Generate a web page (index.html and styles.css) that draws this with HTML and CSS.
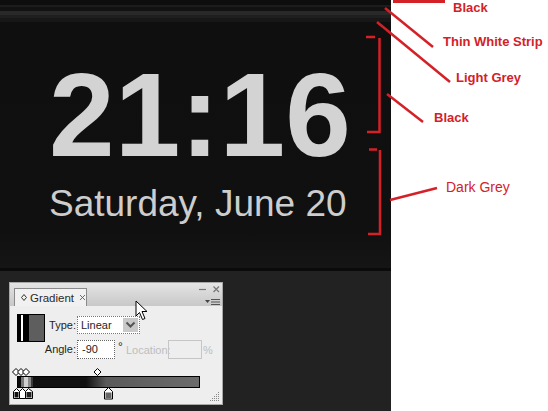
FILE: index.html
```html
<!DOCTYPE html>
<html>
<head>
<meta charset="utf-8">
<link rel="stylesheet" href="styles.css">
</head>
<body>
<div class="page">
  <div class="device">
    <div class="bands">
      <div class="b b1"></div><div class="b b2"></div><div class="b b3"></div>
      <div class="b b4"></div><div class="b b5"></div><div class="b b6"></div>
    </div>
    <div class="screen">
      <div class="time">21:16</div>
      <div class="date">Saturday, June 20</div>
    </div>
    <div class="divider"></div>
    <div class="dock">
      <div class="panel">
        <div class="ptitle">
          <div class="tab">
            <svg class="tabicon" width="6" height="7" viewBox="0 0 6 7"><path d="M3 0.5 L5.5 3.5 L3 6.5 L0.5 3.5 Z" fill="none" stroke="#333" stroke-width="1"/></svg>
            <span class="tabname">Gradient</span>
            <svg class="tabx" width="7" height="7" viewBox="0 0 7 7"><path d="M1 1 L6 6 M6 1 L1 6" stroke="#666" stroke-width="1"/></svg>
          </div>
          <svg class="pctrl" width="24" height="23" viewBox="0 0 24 23">
            <path d="M1 6.5 H8" stroke="#777" stroke-width="1.2"/>
            <path d="M15.5 3.5 L21 9 M21 3.5 L15.5 9" stroke="#777" stroke-width="1.2"/>
            <path d="M7 17 H12 L9.5 20 Z" fill="#444"/>
            <path d="M13 16.5 H22 M13 19 H22 M13 21.5 H22" stroke="#555" stroke-width="1"/>
          </svg>
        </div>
        <div class="pbody">
          <div class="row1">
            <div class="swatch"></div>
            <div class="lbl1">Type:</div>
            <div class="select"><span class="selval">Linear</span>
              <div class="selbtn"><svg width="11" height="8" viewBox="0 0 11 8"><path d="M1.5 1.5 L5.5 5.5 L9.5 1.5" fill="none" stroke="#555" stroke-width="2"/></svg></div>
            </div>
          </div>
          <div class="row2">
            <div class="lbl2">Angle:</div>
            <div class="input">-90</div>
            <div class="deg">°</div>
            <div class="loc">Location:</div>
            <div class="input2"></div>
            <div class="pct">%</div>
          </div>
          <div class="gwrap">
            <div class="gbar"></div>
            <svg class="markers" width="200" height="32" viewBox="0 0 200 32">
              <path d="M4 0.5 L7.5 4 L4 7.5 L0.5 4 Z" fill="#fff" stroke="#000" stroke-width="1"/>
              <path d="M9 0.5 L12.5 4 L9 7.5 L5.5 4 Z" fill="#fff" stroke="#000" stroke-width="1"/>
              <path d="M14 0.5 L17.5 4 L14 7.5 L10.5 4 Z" fill="#fff" stroke="#000" stroke-width="1"/>
              <path d="M85.5 0.5 L89 4 L85.5 7.5 L82 4 Z" fill="#fff" stroke="#000" stroke-width="1"/>
              <path d="M1.5 23.5 L4.5 20.5 L7.5 23.5 V30.5 H1.5 Z" fill="#fff" stroke="#000" stroke-width="1"/>
              <rect x="2.5" y="24" width="4" height="5.5" fill="#111"/>
              <path d="M7.5 23.5 L10.5 20.5 L13.5 23.5 V30.5 H7.5 Z" fill="#fff" stroke="#000" stroke-width="1"/>
              <path d="M13.5 23.5 L16.5 20.5 L20.5 23.5 V30.5 H13.5 Z" fill="#fff" stroke="#000" stroke-width="1"/>
              <rect x="14.5" y="24" width="5" height="5.5" fill="#222"/>
              <path d="M92.5 23.5 L96.5 19.5 L100.5 23.5 V31 H92.5 Z" fill="#fff" stroke="#000" stroke-width="1"/>
              <rect x="93.5" y="24.5" width="6" height="5.5" fill="#666"/>
            </svg>
          </div>
        </div>
        <svg class="grip" width="10" height="10" viewBox="0 0 10 10">
          <g fill="#888">
            <rect x="8" y="0" width="1" height="1"/>
            <rect x="6" y="2" width="1" height="1"/><rect x="8" y="2" width="1" height="1"/>
            <rect x="4" y="4" width="1" height="1"/><rect x="6" y="4" width="1" height="1"/><rect x="8" y="4" width="1" height="1"/>
            <rect x="2" y="6" width="1" height="1"/><rect x="4" y="6" width="1" height="1"/><rect x="6" y="6" width="1" height="1"/><rect x="8" y="6" width="1" height="1"/>
            <rect x="0" y="8" width="1" height="1"/><rect x="2" y="8" width="1" height="1"/><rect x="4" y="8" width="1" height="1"/><rect x="6" y="8" width="1" height="1"/><rect x="8" y="8" width="1" height="1"/>
          </g>
        </svg>
        <svg class="cursor" width="14" height="21" viewBox="0 0 14 21">
          <path d="M1 1 L1 16 L4.5 12.5 L7.5 19.5 L10 18.5 L7 11.5 L12 11.5 Z" fill="#fff" stroke="#000" stroke-width="1" stroke-linejoin="miter"/>
        </svg>
      </div>
    </div>
  </div>

  <svg class="notes" width="548" height="411" viewBox="0 0 548 411">
    <g stroke="#d42128" stroke-width="2.5" fill="none" stroke-linecap="butt">
      <path d="M385 8 L433 47"/>
      <path d="M377 22 L450 82"/>
      <path d="M366 37 H375"/>
      <path d="M379.5 38 V132 H367"/>
      <path d="M387 94 L423 122"/>
      <path d="M369 149.5 H377"/>
      <path d="M380 150 V234 H368"/>
      <path d="M390 200 L437 188"/>
    </g>
    <rect x="393" y="0" width="52" height="3" fill="#d42128"/>
  </svg>
  <div class="note n1">Black</div>
  <div class="note n2">Thin White Strip</div>
  <div class="note n3">Light Grey</div>
  <div class="note n4">Black</div>
  <div class="note n5">Dark Grey</div>
</div>
</body>
</html>
```

FILE: styles.css
```css
* { box-sizing: border-box; }
html, body { margin: 0; padding: 0; }
body {
  background: #ffffff;
  width: 548px;
  height: 411px;
  overflow: hidden;
  font-family: "Liberation Sans", Arial, sans-serif;
}
.page { position: relative; width: 548px; height: 411px; }

.device { width: 391px; display: flex; flex-direction: column; }
.bands { display: flex; flex-direction: column; }
.b1 { height: 5px; background: #0d0d0d; }
.b2 { height: 2px; background: #1c1c1c; }
.b3 { height: 4px; background: #121212; }
.b4 { height: 4px; background: #292929; }
.b5 { height: 3px; background: #1f1f1f; }
.b6 { height: 4px; background: #171717; }

.screen {
  height: 246px;
  background: linear-gradient(#0f0f0f 0, #101010 85%, #151515 100%);
  padding: 34px 0 0 49px;
  color: #d3d3d3;
}
.time { font-weight: 700; font-size: 118px; line-height: 118px; height: 118px; white-space: nowrap; }
.date { margin-top: 11px; font-size: 37px; line-height: 37px; color: #cdcdcd; white-space: nowrap; }
.divider { height: 3px; background: #0b0b0b; }
.dock { height: 140px; background: #222222; padding: 11px 0 0 9px; }

.panel {
  position: relative;
  width: 214px;
  height: 123px;
  background: #eeeeee;
  border: 1px solid #a8a8a8;
  display: flex;
  flex-direction: column;
  font-size: 11px;
  color: #1e1e1e;
}
.ptitle {
  height: 23px;
  background: linear-gradient(#e4e4e4, #c8c8c8);
  display: flex;
  align-items: flex-end;
  padding-left: 4px;
}
.tab {
  width: 73px;
  height: 18px;
  background: #f1f1f1;
  border: 1px solid #8a8a8a;
  border-bottom: none;
  display: flex;
  align-items: center;
  padding-left: 6px;
}
.tabicon { margin-right: 3px; }
.tabname { font-size: 11.5px; color: #2a2a2a; }
.tabx { margin-left: 5px; }
.pctrl { margin-left: auto; align-self: flex-start; }

.pbody { padding: 8px 0 0 7px; display: flex; flex-direction: column; }
.row1 { display: flex; height: 26px; }
.swatch {
  flex: none;
  width: 28px;
  height: 28px;
  border: 1px solid #000;
  background: linear-gradient(to right, #000 0 3px, #fff 3px 5px, #000 5px 11px, #5e5e5e 11px);
}
.lbl1 { width: 31px; text-align: right; margin-top: 2px; height: 18px; line-height: 18px; }
.select {
  margin: 2px 0 0 1px;
  width: 63px;
  height: 18px;
  border: 1px dotted #777;
  background: #fff;
  display: flex;
  align-items: center;
  padding-left: 3px;
}
.selval { line-height: 16px; }
.selbtn {
  margin-left: auto;
  margin-right: 1px;
  width: 15px;
  height: 14px;
  background: #c9c9c9;
  display: flex;
  align-items: center;
  justify-content: center;
}
.row2 { display: flex; height: 19px; align-items: center; }
.lbl2 { width: 59px; text-align: right; line-height: 19px; }
.input {
  margin-left: 1px;
  width: 38px;
  height: 19px;
  border: 1px dotted #666;
  background: #fff;
  padding-left: 4px;
  line-height: 17px;
}
.deg { width: 11px; text-align: center; font-size: 12px; align-self: flex-start; line-height: 14px; }
.loc { color: #bdbdbd; width: 42px; white-space: nowrap; }
.input2 { width: 34px; height: 19px; border: 1px solid #c6c6c6; }
.pct { color: #bdbdbd; margin-left: 1px; }

.gwrap { position: relative; width: 183px; height: 32px; margin-top: 9px; }
.gbar {
  margin-top: 8px;
  height: 12px;
  border: 1px solid #000;
  background: linear-gradient(to right, #0a0a0a 0 3px, #777 3px 6px, #cfcfcf 6px 10px, #8a8a8a 10px 13px, #3a3a3a 13px 15px, #111 15px 68px, #5a5a5a 88px, #6b6b6b 100%);
}
.markers { position: absolute; left: -5px; top: 0; }
.grip { position: absolute; right: 2px; bottom: 2px; }
.cursor { position: absolute; left: 125px; top: 17px; }

.notes { position: absolute; left: 0; top: 0; pointer-events: none; }
.note {
  position: absolute;
  color: #d42128;
  font-size: 13px;
  line-height: 13px;
  font-weight: 700;
  white-space: nowrap;
}
.n1 { left: 453px; top: 1px; }
.n2 { left: 443px; top: 35px; }
.n3 { left: 456px; top: 71px; }
.n4 { left: 434px; top: 111px; }
.n5 { left: 446px; top: 180px; font-weight: 400; font-size: 14px; line-height: 14px; }
```
